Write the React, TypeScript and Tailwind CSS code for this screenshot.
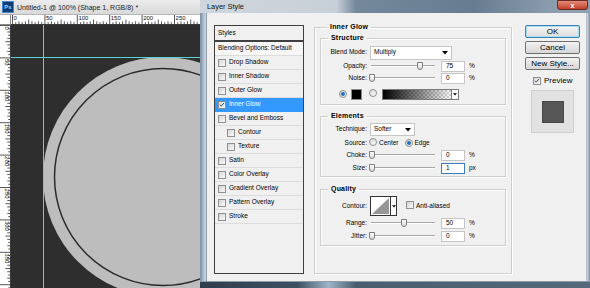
import React from "react";

const Check = ({ checked = false }: { checked?: boolean }) => (
  <span className="relative inline-block w-[8px] h-[8px] shrink-0 border border-[#8f8f8f] bg-gradient-to-br from-[#d6d6d6] to-[#fafafa]">
    {checked && (
      <svg viewBox="0 0 8 8" className="absolute inset-0 w-full h-full">
        <path d="M1.3 3.8 L3 5.6 L6.6 1.4" stroke="#1f3a66" strokeWidth="1.2" fill="none" />
      </svg>
    )}
  </span>
);

const Radio = ({ on = false }: { on?: boolean }) => (
  <span className="inline-flex items-center justify-center w-[8px] h-[8px] shrink-0 rounded-full border border-[#8f8f8f] bg-gradient-to-br from-[#d8d8d8] to-[#fbfbfb]">
    {on && <span className="w-[4px] h-[4px] rounded-full bg-[#1e6fc8]" />}
  </span>
);

const Slider = ({ pct }: { pct: number }) => (
  <div className="relative w-[64px] h-[10px] ml-[4px] shrink-0">
    <div className="absolute left-0 right-0 top-[4px] h-[2px] border-t border-[#a6a6a6] border-b border-b-white" />
    <div
      className="absolute top-[1px] w-[6px] h-[8px] border border-[#7d7d7d] bg-gradient-to-b from-[#fafafa] to-[#dcdcdc] rounded-b-[3px]"
      style={{ left: `${pct * 0.64 - 2}px` }}
    />
  </div>
);

const Field = ({ value, unit, focus = false }: { value: string; unit: string; focus?: boolean }) => (
  <>
    <div
      className={`ml-[6px] w-[24px] h-[11px] bg-white border flex items-center pl-[4px] ${
        focus ? "border-[#3d7bbf]" : "border-[#c5c5c5]"
      }`}
    >
      {value}
    </div>
    <span className="ml-[4px]">{unit}</span>
  </>
);

const Label = ({ text }: { text: string }) => (
  <span className="w-[46px] text-right shrink-0">{text}</span>
);

const SliderRow = ({ label, pct, value, unit, focus }: { label: string; pct: number; value: string; unit: string; focus?: boolean }) => (
  <div className="flex items-center h-[12px]">
    <Label text={label} />
    <Slider pct={pct} />
    <Field value={value} unit={unit} focus={focus} />
  </div>
);

const Arrow = () => (
  <svg viewBox="0 0 6 4" className="w-[6px] h-[4px]">
    <path d="M0 0 H6 L3 3.5 Z" fill="#000" />
  </svg>
);

const Group = ({ title, className, children }: { title: string; className: string; children: React.ReactNode }) => (
  <fieldset className={`border border-[#cdcdcd] shadow-[inset_1px_1px_0_#fff,1px_1px_0_#fff] ${className}`}>
    <legend className="ml-[7px] px-[3px] font-bold text-[7px] leading-[8px] tracking-[0.2px]">{title}</legend>
    {children}
  </fieldset>
);

const styleItems = [
  { name: "Drop Shadow" },
  { name: "Inner Shadow" },
  { name: "Outer Glow" },
  { name: "Inner Glow", on: true },
  { name: "Bevel and Emboss" },
  { name: "Contour", sub: true },
  { name: "Texture", sub: true },
  { name: "Satin" },
  { name: "Color Overlay" },
  { name: "Gradient Overlay" },
  { name: "Pattern Overlay" },
  { name: "Stroke" },
];

const hLabels = ["0", "50", "100", "150", "200", "250"];
const vLabels = ["0", "50", "100", "150", "200", "250", "300", "350"];

const Rulers = () => {
  const ticks = Array.from({ length: 60 }, (_, i) => i);
  return (
    <div className="flex h-[10px] shrink-0">
      <div className="w-[11px] h-[10px] bg-white border-r border-b border-[#8a8a8a]" />
      <svg className="flex-1 h-[10px] bg-white border-b border-[#3a3a3a]" viewBox="0 0 189 10" preserveAspectRatio="none">
        {ticks.map((i) => {
          const x = 1.5 + i * 3.24;
          const h = i % 10 === 0 ? 10 : i % 5 === 0 ? 5 : i % 2 === 0 ? 3 : 2;
          return <line key={i} x1={x} x2={x} y1={10 - h} y2={10} stroke="#222" strokeWidth="0.8" />;
        })}
        {hLabels.map((t, i) => (
          <text key={t} x={2.6 + i * 32.4} y={6} fontSize="6" fontFamily="Liberation Sans, sans-serif" fill="#111">
            {t}
          </text>
        ))}
      </svg>
    </div>
  );
};

const Canvas = () => {
  const ticks = Array.from({ length: 82 }, (_, i) => i);
  return (
    <div className="flex flex-1 min-h-0">
      <svg className="w-[11px] h-full bg-white border-r border-[#3a3a3a] shrink-0" viewBox="0 0 11 263" preserveAspectRatio="none">
        {ticks.map((i) => {
          const y = 0.5 + i * 3.24;
          const w = i % 10 === 0 ? 11 : i % 5 === 0 ? 5 : i % 2 === 0 ? 3 : 2;
          return <line key={i} y1={y} y2={y} x1={11 - w} x2={11} stroke="#222" strokeWidth="0.8" />;
        })}
        {vLabels.map((t, i) => (
          <text
            key={t}
            x={0}
            y={0}
            fontSize="6"
            fontFamily="Liberation Sans, sans-serif"
            fill="#111"
            transform={`translate(5.5 ${i * 32.4 + 1.5}) rotate(90)`}
          >
            {t}
          </text>
        ))}
      </svg>
      <svg className="flex-1 h-full bg-[#2e2e2e]" viewBox="0 0 189 263" preserveAspectRatio="none">
        <circle cx="152" cy="152" r="120" fill="#bdbdbd" />
        <circle cx="152" cy="152" r="108.5" fill="none" stroke="#2b2b2b" strokeWidth="1.5" />
        <line x1="32.5" x2="32.5" y1="0" y2="263" stroke="#5cd0d2" strokeWidth="1" />
        <line x1="0" x2="189" y1="32.5" y2="32.5" stroke="#5cd0d2" strokeWidth="1" />
      </svg>
    </div>
  );
};

export default function App() {
  return (
    <div className="w-[590px] h-[288px] flex overflow-hidden bg-[#2e2e2e] font-['Liberation_Sans',Arial,sans-serif] text-[6.5px] leading-none text-black">
      {/* Photoshop document window */}
      <div className="w-[200px] flex flex-col shrink-0">
        <div className="h-[15px] flex items-center bg-gradient-to-b from-[#ececec] to-[#d9d9d9] border-b border-[#b5b5b5] shrink-0">
          <div className="ml-[2px] w-[12px] h-[12px] bg-[#0d3d73] border border-[#4a86c5] flex items-center justify-center text-[6px] font-bold text-[#9fd2ff]">
            Ps
          </div>
          <span className="ml-[3px] text-[7px] text-[#1a1a1a] whitespace-nowrap">Untitled-1 @ 100% (Shape 1, RGB/8) *</span>
        </div>
        <Rulers />
        <Canvas />
      </div>

      {/* Layer Style dialog */}
      <div className="flex-1 flex flex-col bg-[#5f7387]">
        <div className="h-[13px] flex items-center shrink-0 bg-[linear-gradient(90deg,#cfd6dd_0%,#c7cfd8_35%,#74889c_40%,#687c91_70%,#8e9fb0_92%)]">
          <span className="ml-[7px] text-[7.4px] text-[#111]">Layer Style</span>
          <div className="ml-auto mr-[2px] self-start w-[31px] h-[10px] rounded-b-[3px] bg-gradient-to-b from-[#e38a78] to-[#c2402a] border border-[#6b2a20] flex items-center justify-center text-white text-[7px] font-bold">
            x
          </div>
        </div>
        <div className="flex-1 flex min-h-0">
          <div className="w-[7px] bg-gradient-to-r from-[#7b8ea2] to-[#d3dbe3] border-r border-[#8d9aa8] shrink-0" />
          <div className="flex-1 bg-[#f0f0f0] flex items-start pl-[7px] pt-[10px]">
            {/* styles list */}
            <div className="w-[90px] mt-[2px] shrink-0 flex flex-col">
              <div className="h-[16px] border border-[#3f3f3f] flex items-center pl-[3px]">Styles</div>
              <div className="h-[233px] border border-[#3f3f3f] flex flex-col bg-[#f0f0f0]">
                <div className="h-[14px] border-b border-[#dcdcdc] flex items-center pl-[3px] bg-[#f6f6f6]">
                  Blending Options: Default
                </div>
                {styleItems.map((it) => (
                  <div
                    key={it.name}
                    className={`h-[14px] border-b flex items-center gap-[3px] ${it.sub ? "pl-[12px]" : "pl-[3px]"} ${
                      it.on ? "bg-[#3399ff] text-white border-[#3399ff]" : "border-[#dcdcdc]"
                    }`}
                  >
                    <Check checked={!!it.on} />
                    <span>{it.name}</span>
                  </div>
                ))}
              </div>
            </div>

            {/* options */}
            <Group title="Inner Glow" className="ml-[10px] w-[198px] h-[251px] px-[5px] shrink-0">
              <Group title="Structure" className="mt-[3px] h-[71px]">
                <div className="flex items-center h-[15px] mt-[3px]">
                  <Label text="Blend Mode:" />
                  <div className="ml-[3px] w-[82px] h-[14px] bg-white border border-[#c5c5c5] flex items-center pl-[3px] pr-[3px]">
                    <span>Multiply</span>
                    <span className="ml-auto">
                      <Arrow />
                    </span>
                  </div>
                </div>
                <SliderRow label="Opacity:" pct={75} value="75" unit="%" />
                <SliderRow label="Noise:" pct={0} value="0" unit="%" />
                <div className="flex items-center h-[12px] mt-[4px]">
                  <span className="ml-[18px]">
                    <Radio on />
                  </span>
                  <span className="ml-[4px] w-[11px] h-[11px] bg-black border border-[#8a8a8a]" />
                  <span className="ml-[7px]">
                    <Radio />
                  </span>
                  <div className="ml-[5px] w-[77px] h-[11px] border border-[#7a7a7a] flex bg-white">
                    <div className="flex-1 bg-[conic-gradient(#cfcfcf_25%,#fff_0_50%,#cfcfcf_0_75%,#fff_0)] bg-[length:4px_4px]">
                      <div className="h-full bg-gradient-to-r from-black to-transparent" />
                    </div>
                    <div className="w-[7px] border-l border-[#7a7a7a] flex items-center justify-center">
                      <svg viewBox="0 0 6 4" className="w-[4px] h-[3px]">
                        <path d="M0 0 H6 L3 3.5 Z" fill="#000" />
                      </svg>
                    </div>
                  </div>
                </div>
              </Group>

              <Group title="Elements" className="mt-[7px] h-[65px]">
                <div className="flex items-center h-[13px] mt-[3px]">
                  <Label text="Technique:" />
                  <div className="ml-[3px] w-[45px] h-[13px] bg-white border border-[#c5c5c5] flex items-center pl-[3px] pr-[3px]">
                    <span>Softer</span>
                    <span className="ml-auto">
                      <Arrow />
                    </span>
                  </div>
                </div>
                <div className="flex items-center h-[12px] mt-[1px]">
                  <Label text="Source:" />
                  <span className="ml-[2px]">
                    <Radio />
                  </span>
                  <span className="ml-[2px]">Center</span>
                  <span className="ml-[6px]">
                    <Radio on />
                  </span>
                  <span className="ml-[2px]">Edge</span>
                </div>
                <SliderRow label="Choke:" pct={0} value="0" unit="%" />
                <div className="mt-[1px]">
                  <SliderRow label="Size:" pct={0} value="1" unit="px" focus />
                </div>
              </Group>

              <Group title="Quality" className="mt-[8px] h-[61px]">
                <div className="flex items-center h-[20px] mt-[3px]">
                  <Label text="Contour:" />
                  <div className="ml-[3px] w-[27px] h-[20px] border border-[#333] bg-white flex">
                    <svg viewBox="0 0 19 18" className="w-[19px] h-[18px]" preserveAspectRatio="none">
                      <path d="M1 17 L18 1 L18 17 Z" fill="#969696" />
                    </svg>
                    <div className="flex-1 border-l border-[#333] flex items-center justify-center">
                      <svg viewBox="0 0 6 4" className="w-[4px] h-[3px]">
                        <path d="M0 0 H6 L3 3.5 Z" fill="#000" />
                      </svg>
                    </div>
                  </div>
                  <span className="ml-[9px]">
                    <Check />
                  </span>
                  <span className="ml-[2px]">Anti-aliased</span>
                </div>
                <div className="mt-[1px]">
                  <SliderRow label="Range:" pct={50} value="50" unit="%" />
                </div>
                <div className="mt-[1px]">
                  <SliderRow label="Jitter:" pct={0} value="0" unit="%" />
                </div>
              </Group>
            </Group>

            {/* buttons */}
            <div className="ml-[13px] mt-[2px] w-[55px] shrink-0 flex flex-col text-[8px]">
              <button className="h-[13px] rounded-[2px] border border-[#3c7fb1] bg-gradient-to-b from-[#f6f6f6] to-[#dcdcdc] shadow-[inset_0_0_0_1px_#a6def9]">
                OK
              </button>
              <button className="mt-[3px] h-[13px] rounded-[2px] border border-[#707070] bg-gradient-to-b from-[#f2f2f2] to-[#d6d6d6]">
                Cancel
              </button>
              <button className="mt-[3px] h-[13px] rounded-[2px] border border-[#707070] bg-gradient-to-b from-[#f2f2f2] to-[#d6d6d6]">
                New Style...
              </button>
              <div className="mt-[7px] flex items-center pl-[8px] gap-[3px]">
                <Check checked />
                <span>Preview</span>
              </div>
              <div className="mt-[5px] ml-[6px] w-[43px] h-[43px] bg-[#e2e2e2] border border-[#d0d0d0] flex items-center justify-center">
                <div className="w-[22px] h-[22px] bg-[#575757] border border-[#474747]" />
              </div>
            </div>
          </div>
          <div className="w-[4px] bg-gradient-to-r from-[#d3dbe3] to-[#7b8ea2] border-l border-[#b9c2cc] shrink-0" />
        </div>
        <div className="h-[7px] shrink-0 border-t border-[#8d9aa8] bg-[linear-gradient(90deg,#2f3e4c_0%,#3d5063_25%,#9fb4c8_33%,#4a5d70_40%,#55697d_100%)]" />
      </div>
    </div>
  );
}
